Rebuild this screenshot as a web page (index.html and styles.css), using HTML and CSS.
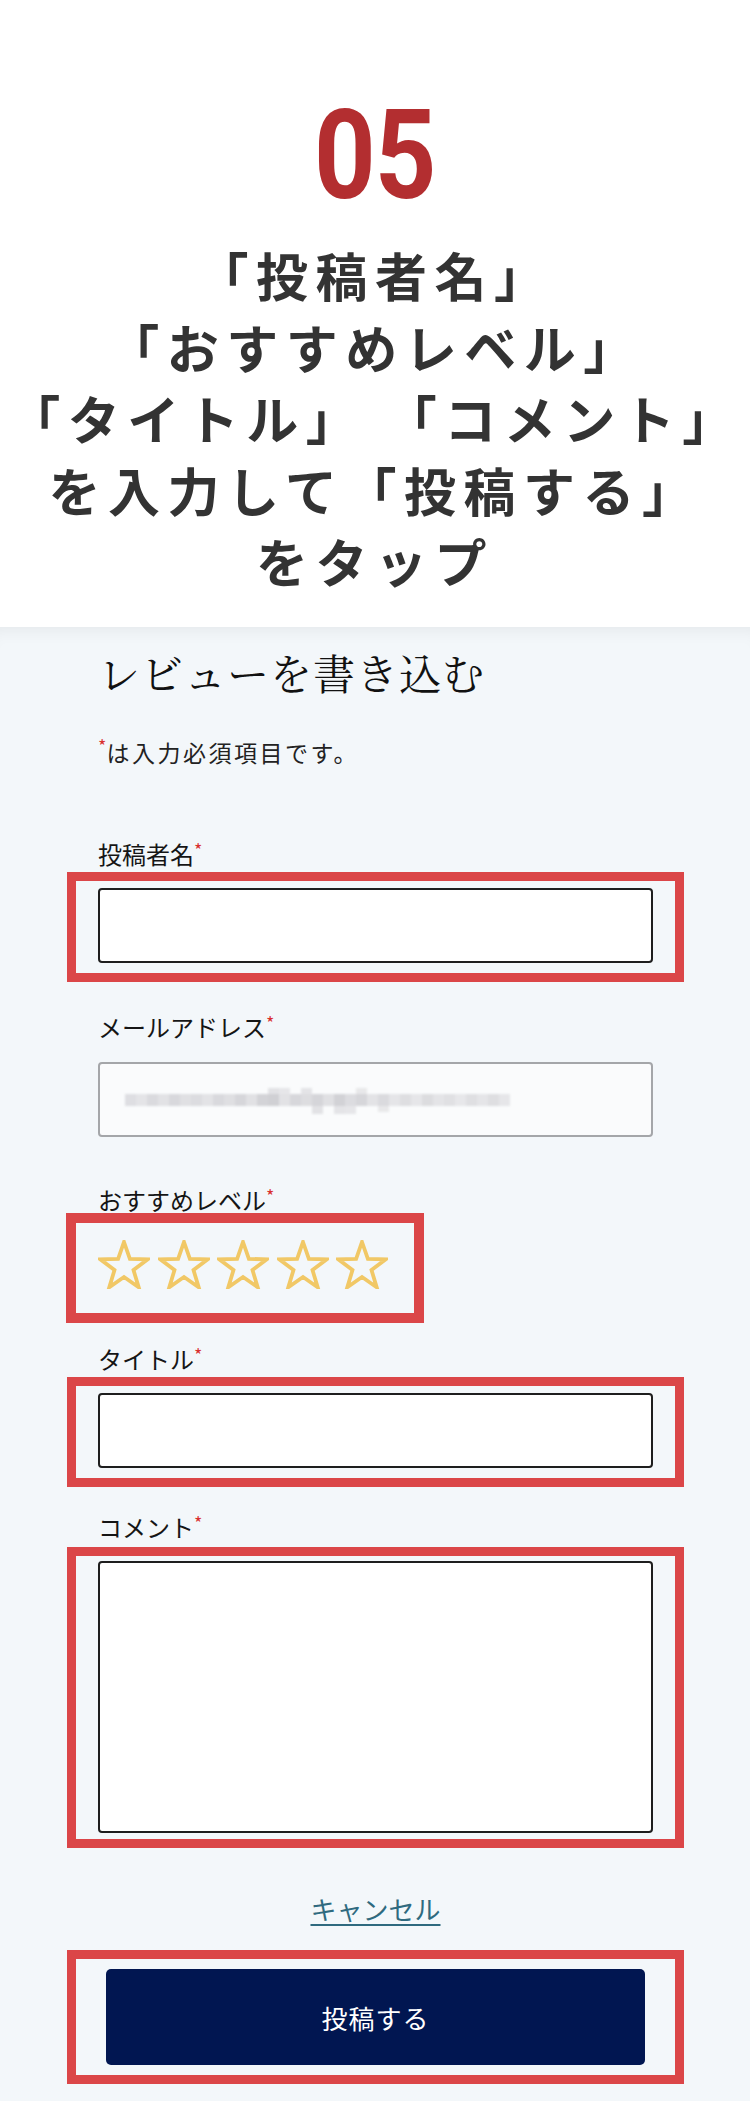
FILE: index.html
```html
<!DOCTYPE html>
<html lang="ja">
<head>
<meta charset="utf-8">
<title>レビューを書き込む</title>
<link rel="stylesheet" href="styles.css">
</head>
<body>
<header class="intro">
  <div class="step-num"><span>05</span></div>
  <h1 class="step-title">「投稿者名」<br>「おすすめレベル」<br>「タイトル」 「コメント」<br>を入力して「投稿する」<br>をタップ</h1>
</header>
<main class="review">
  <div class="review-inner">
    <h2 class="review-heading">レビューを書き込む</h2>
    <p class="note"><span class="req">*</span>は入力必須項目です。</p>

    <div class="field f-name">
      <label class="label">投稿者名<span class="req">*</span></label>
      <div class="hl hl-input"><input class="input" type="text"></div>
    </div>

    <div class="field f-mail">
      <label class="label">メールアドレス<span class="req">*</span></label>
      <div class="input input-mail">
        <svg class="mosaic" width="385" height="30" viewBox="0 0 385 30" aria-hidden="true">
          <rect x="0" y="6" width="11" height="12" fill="#dedee2"/>
          <rect x="11" y="6" width="11" height="12" fill="#e4e4e7"/>
          <rect x="22" y="6" width="11" height="12" fill="#dadade"/>
          <rect x="33" y="6" width="11" height="12" fill="#e2e2e5"/>
          <rect x="44" y="6" width="11" height="12" fill="#d8d8dc"/>
          <rect x="55" y="6" width="11" height="12" fill="#e0e0e3"/>
          <rect x="66" y="6" width="11" height="12" fill="#dcdce0"/>
          <rect x="77" y="6" width="11" height="12" fill="#e3e3e6"/>
          <rect x="88" y="6" width="11" height="12" fill="#d9d9dd"/>
          <rect x="99" y="6" width="11" height="12" fill="#dfdfe2"/>
          <rect x="110" y="6" width="11" height="12" fill="#d6d6da"/>
          <rect x="121" y="6" width="11" height="12" fill="#e1e1e4"/>
          <rect x="132" y="6" width="11" height="12" fill="#d3d3d7"/>
          <rect x="143" y="6" width="11" height="12" fill="#d0d0d4"/>
          <rect x="154" y="6" width="11" height="12" fill="#e2e2e5"/>
          <rect x="165" y="6" width="11" height="12" fill="#d7d7db"/>
          <rect x="176" y="6" width="11" height="12" fill="#dddde0"/>
          <rect x="187" y="6" width="11" height="12" fill="#d5d5d9"/>
          <rect x="198" y="6" width="11" height="12" fill="#e0e0e3"/>
          <rect x="209" y="6" width="11" height="12" fill="#d2d2d6"/>
          <rect x="220" y="6" width="11" height="12" fill="#dcdce0"/>
          <rect x="231" y="6" width="11" height="12" fill="#d6d6da"/>
          <rect x="242" y="6" width="11" height="12" fill="#e3e3e6"/>
          <rect x="253" y="6" width="11" height="12" fill="#dadade"/>
          <rect x="264" y="6" width="11" height="12" fill="#e5e5e8"/>
          <rect x="275" y="6" width="11" height="12" fill="#dedee1"/>
          <rect x="286" y="6" width="11" height="12" fill="#e6e6e9"/>
          <rect x="297" y="6" width="11" height="12" fill="#dcdcdf"/>
          <rect x="308" y="6" width="11" height="12" fill="#e4e4e7"/>
          <rect x="319" y="6" width="11" height="12" fill="#e0e0e3"/>
          <rect x="330" y="6" width="11" height="12" fill="#e7e7ea"/>
          <rect x="341" y="6" width="11" height="12" fill="#dfdfe2"/>
          <rect x="352" y="6" width="11" height="12" fill="#e5e5e8"/>
          <rect x="363" y="6" width="11" height="12" fill="#dedee1"/>
          <rect x="374" y="6" width="11" height="12" fill="#e6e6e9"/>
          <rect x="143" y="0" width="11" height="6" fill="#e2e2e5"/>
          <rect x="154" y="0" width="11" height="6" fill="#e6e6e9"/>
          <rect x="176" y="0" width="11" height="6" fill="#e4e4e7"/>
          <rect x="231" y="0" width="11" height="6" fill="#e8e8ea"/>
          <rect x="187" y="18" width="11" height="8" fill="#e2e2e5"/>
          <rect x="209" y="18" width="11" height="8" fill="#e4e4e7"/>
          <rect x="220" y="18" width="11" height="8" fill="#e6e6e9"/>
          <rect x="253" y="18" width="11" height="6" fill="#e8e8ea"/>
        </svg>
      </div>
    </div>

    <div class="field f-rate">
      <label class="label">おすすめレベル<span class="req">*</span></label>
      <div class="hl hl-stars">
        <div class="stars">
          <svg class="star" width="52" height="49" viewBox="0 0 52 49" aria-hidden="true"><polygon points="26,2 31.88,18.91 49.78,19.27 35.51,30.09 40.69,47.23 26,37 11.31,47.23 16.49,30.09 2.22,19.27 20.12,18.91"/></svg>
          <svg class="star" width="52" height="49" viewBox="0 0 52 49" aria-hidden="true"><polygon points="26,2 31.88,18.91 49.78,19.27 35.51,30.09 40.69,47.23 26,37 11.31,47.23 16.49,30.09 2.22,19.27 20.12,18.91"/></svg>
          <svg class="star" width="52" height="49" viewBox="0 0 52 49" aria-hidden="true"><polygon points="26,2 31.88,18.91 49.78,19.27 35.51,30.09 40.69,47.23 26,37 11.31,47.23 16.49,30.09 2.22,19.27 20.12,18.91"/></svg>
          <svg class="star" width="52" height="49" viewBox="0 0 52 49" aria-hidden="true"><polygon points="26,2 31.88,18.91 49.78,19.27 35.51,30.09 40.69,47.23 26,37 11.31,47.23 16.49,30.09 2.22,19.27 20.12,18.91"/></svg>
          <svg class="star" width="52" height="49" viewBox="0 0 52 49" aria-hidden="true"><polygon points="26,2 31.88,18.91 49.78,19.27 35.51,30.09 40.69,47.23 26,37 11.31,47.23 16.49,30.09 2.22,19.27 20.12,18.91"/></svg>
        </div>
      </div>
    </div>

    <div class="field f-title">
      <label class="label">タイトル<span class="req">*</span></label>
      <div class="hl hl-input"><input class="input" type="text"></div>
    </div>

    <div class="field f-comment">
      <label class="label">コメント<span class="req">*</span></label>
      <div class="hl hl-textarea"><textarea class="input textarea"></textarea></div>
    </div>

    <div class="cancel-row"><a class="cancel" href="#">キャンセル</a></div>

    <div class="hl hl-button"><button class="submit" type="button">投稿する</button></div>
  </div>
</main>
</body>
</html>
```

FILE: styles.css
```css
* { box-sizing: border-box; }
html, body { margin: 0; padding: 0; }
body {
  width: 750px;
  background: #f3f7fa;
  font-family: "Noto Sans CJK JP", "Noto Sans", sans-serif;
  color: #1a1a1a;
}

/* ---------- intro ---------- */
.intro {
  background: #ffffff;
  height: 627px;
  padding-top: 93px;
  text-align: center;
}
.step-num {
  height: 125px;
  font-family: Roboto, "Liberation Sans", sans-serif;
  font-weight: 700;
  font-size: 125px;
  line-height: 125px;
  color: #b32e30;
}
.step-num span {
  display: inline-block;
  transform: scaleX(0.86);
  letter-spacing: -1px;
}
.step-title {
  margin: 21px 0 0;
  font-size: 52px;
  font-weight: 700;
  line-height: 71.5px;
  letter-spacing: 7.5px;
  color: #333333;
  white-space: nowrap;
}

/* ---------- review form ---------- */
.review {
  display: block;
  height: 1474px;
  padding: 20px 0 0 98px;
  box-shadow: inset 0 16px 18px -14px rgba(0, 0, 0, 0.07);
}
.review-inner { width: 555px; }

.review-heading {
  margin: 0;
  font-family: "Noto Serif CJK JP", "Noto Sans CJK JP", serif;
  font-weight: 400;
  font-size: 42px;
  line-height: 50px;
  letter-spacing: 1px;
  color: #111;
}
.note {
  margin: 39px 0 0;
  font-size: 23px;
  line-height: 32px;
  letter-spacing: 2.5px;
  color: #222;
}
.req {
  color: #d9302f;
  font-size: 18px;
  line-height: 1;
  vertical-align: top;
  letter-spacing: 0;
}

.label {
  display: block;
  font-size: 24px;
  line-height: 28px;
  color: #151515;
}

.f-name { margin-top: 72px; }
.f-mail { margin-top: 31px; }
.f-rate { margin-top: 49px; }
.f-title { margin-top: 22px; }
.f-comment { margin-top: 26px; }

.hl {
  border: 9px solid #db4648;
}
.hl-input {
  margin: 4px -31px 0;
  padding: 7px 22px 10px;
}
.hl-textarea {
  margin: 6px -31px 0;
  padding: 5px 22px 6px;
}
.hl-stars {
  display: inline-block;
  margin: -1px 0 0 -32px;
  border-width: 10px;
  padding: 17px 26px 24px 22px;
}
.hl-button {
  margin: 21px -31px 0;
  padding: 10px 30px;
}

.input {
  display: block;
  width: 100%;
  height: 75px;
  margin: 0;
  border: 2px solid #1e1e1e;
  border-radius: 4px;
  background: #ffffff;
  font: inherit;
  outline: none;
}
.textarea {
  height: 272px;
  resize: none;
}
.input-mail {
  margin-top: 21px;
  border-color: #a4a6a9;
  background: #fafbfc;
  padding: 0 0 0 25px;
  display: flex;
  align-items: center;
}
.mosaic { display: block; filter: blur(0.8px); margin-top: 6px; }

.stars {
  display: flex;
  gap: 7.5px;
  height: 49px;
}
.star { display: block; }
.star polygon {
  fill: none;
  stroke: #f1c866;
  stroke-width: 3.8;
  stroke-linejoin: miter;
}

.cancel-row {
  margin-top: 45px;
  text-align: center;
  line-height: 32px;
}
.cancel {
  font-size: 26px;
  color: #2f6a7f;
  text-decoration: underline;
  text-underline-offset: 4px;
  text-decoration-thickness: 1.5px;
}

.submit {
  display: block;
  width: 100%;
  height: 96px;
  border: 0;
  border-radius: 5px;
  background: #011651;
  color: #ffffff;
  font-family: "Noto Sans CJK JP", sans-serif;
  font-size: 26px;
  letter-spacing: 1px;
  cursor: pointer;
}
```
